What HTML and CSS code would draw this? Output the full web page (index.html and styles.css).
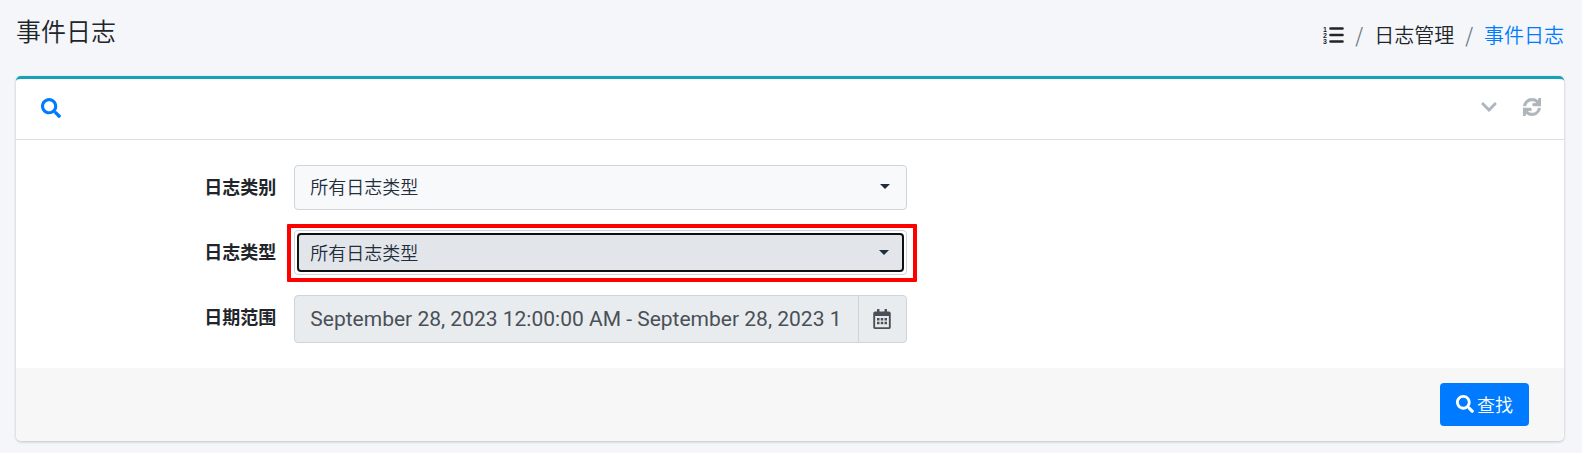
FILE: index.html
```html
<!DOCTYPE html>
<html lang="zh-CN">
<head>
    <meta charset="UTF-8">
    <meta name="viewport" content="width=device-width, initial-scale=1.0">
    <title>事件日志</title>
    <link rel="stylesheet" href="styles.css">
</head>
<body>
    <!-- Page title + breadcrumb -->
    <header class="content-header">
        <h1>事件日志</h1>
        <nav aria-label="breadcrumb">
            <ol class="breadcrumb">
                <li>
                    <svg class="icon-list" viewBox="0 0 21 18" aria-hidden="true">
                        <g class="list-num">
                            <text x="0" y="6">1</text>
                            <text x="0" y="12">2</text>
                            <text x="0" y="18">3</text>
                        </g>
                        <path d="M7.500 2.500h12M7.500 9h12M7.500 15.500h12" fill="none" stroke="currentColor" stroke-width="2.600" stroke-linecap="round"/>
                    </svg>
                </li>
                <li>日志管理</li>
                <li><a href="#">事件日志</a></li>
            </ol>
        </nav>
    </header>

    <main class="card">
        <div class="card-header">
            <svg class="icon-search" viewBox="0 0 512 512" aria-hidden="true"><path fill="currentColor" d="M505 442.700L405.300 343c-4.500-4.500-10.600-7-17-7H372c27.600-35.300 44-79.700 44-128C416 93.100 322.900 0 208 0S0 93.100 0 208s93.100 208 208 208c48.300 0 92.700-16.400 128-44v16.300c0 6.400 2.500 12.500 7 17l99.700 99.700c9.400 9.400 24.600 9.400 33.900 0l28.300-28.300c9.400-9.400 9.400-24.600.1-34zM208 336c-70.700 0-128-57.200-128-128 0-70.700 57.200-128 128-128 70.700 0 128 57.200 128 128 0 70.700-57.200 128-128 128z"/></svg>
            <div class="card-tools">
                <button type="button" class="btn-tool" aria-label="折叠">
                    <svg class="icon-chevron" viewBox="0 0 448 512"><path fill="currentColor" d="M207.029 381.476L12.686 187.132c-9.373-9.373-9.373-24.569 0-33.941l22.667-22.667c9.357-9.357 24.522-9.375 33.901-.04L224 284.505l154.745-154.021c9.379-9.335 24.544-9.317 33.901.04l22.667 22.667c9.373 9.373 9.373 24.569 0 33.941L240.971 381.476c-9.373 9.372-24.569 9.372-33.942 0z"/></svg>
                </button>
                <button type="button" class="btn-tool" aria-label="刷新">
                    <svg class="icon-sync" viewBox="0 0 512 512"><path fill="currentColor" stroke="currentColor" stroke-width="18" d="M440.650 12.570l4 82.770A247.160 247.160 0 0 0 255.830 8C134.730 8 33.910 94.920 12.290 209.820A12 12 0 0 0 24.090 224h49.050a12 12 0 0 0 11.670-9.260 175.910 175.910 0 0 1 317-56.940l-101.460-4.860a12 12 0 0 0-12.570 12v47.410a12 12 0 0 0 12 12H500a12 12 0 0 0 12-12V12a12 12 0 0 0-12-12h-47.370a12 12 0 0 0-11.980 12.570zM255.830 432a175.610 175.610 0 0 1-146-77.800l101.800 4.870a12 12 0 0 0 12.570-12v-47.400a12 12 0 0 0-12-12H12a12 12 0 0 0-12 12V500a12 12 0 0 0 12 12h47.350a12 12 0 0 0 12-12.600l-4.150-82.570A247.170 247.170 0 0 0 255.830 504c121.110 0 221.930-86.920 243.550-201.820a12 12 0 0 0-11.800-14.180h-49.050a12 12 0 0 0-11.670 9.260A175.860 175.860 0 0 1 255.830 432z"/><path fill="currentColor" d="M440 40L360 160l-90-10v70h220V20zM72 472l80-120 90 10v-70H20v200z"/></svg>
                </button>
            </div>
        </div>

        <form id="searchForm">
            <div class="card-body">
                <div class="form-row">
                    <label for="logCategory">日志类别</label>
                    <div class="field">
                        <div class="select-wrap">
                            <select id="logCategory" class="select">
                                <option>所有日志类型</option>
                            </select>
                        </div>
                    </div>
                </div>
                <div class="form-row">
                    <label for="logType">日志类型</label>
                    <div class="field">
                        <div class="select-wrap highlight">
                            <select id="logType" class="select active">
                                <option>所有日志类型</option>
                            </select>
                        </div>
                    </div>
                </div>
                <div class="form-row">
                    <label for="dateRange">日期范围</label>
                    <div class="field">
                        <div class="input-group">
                            <input type="text" id="dateRange" readonly value="September 28, 2023 12:00:00 AM - September 28, 2023 11:59:59 PM">
                            <span class="input-addon">
                                <svg class="icon-calendar" viewBox="0 0 448 512" aria-hidden="true"><path fill="currentColor" fill-rule="evenodd" d="M400 64h-48V12c0-6.600-5.400-12-12-12h-40c-6.600 0-12 5.400-12 12v52H160V12c0-6.600-5.400-12-12-12h-40c-6.600 0-12 5.400-12 12v52H48C21.500 64 0 85.500 0 112v352c0 26.500 21.500 48 48 48h352c26.500 0 48-21.500 48-48V112c0-26.500-21.500-48-48-48zm-6 400H54c-3.300 0-6-2.700-6-6V180h352v278c0 3.300-2.700 6-6 6z"/><path fill="currentColor" d="M96 228h64v64H96zM192 228h64v64h-64zM288 228h64v64h-64zM96 324h64v64H96zM192 324h64v64h-64zM288 324h64v64h-64z"/></svg>
                            </span>
                        </div>
                    </div>
                </div>
            </div>
            <div class="card-footer">
                <button type="button" class="btn-primary">
                    <svg class="icon-search-sm" viewBox="0 0 512 512" aria-hidden="true"><path fill="currentColor" d="M505 442.700L405.300 343c-4.500-4.500-10.600-7-17-7H372c27.600-35.300 44-79.700 44-128C416 93.100 322.900 0 208 0S0 93.100 0 208s93.100 208 208 208c48.300 0 92.700-16.400 128-44v16.300c0 6.400 2.500 12.500 7 17l99.700 99.700c9.400 9.400 24.600 9.400 33.900 0l28.300-28.300c9.400-9.400 9.400-24.600.1-34zM208 336c-70.700 0-128-57.200-128-128 0-70.700 57.200-128 128-128 70.700 0 128 57.200 128 128 0 70.700-57.200 128-128 128z"/></svg>
                    查找
                </button>
            </div>
        </form>
    </main>
</body>
</html>
```
FILE: styles.css
```css
* {
    margin: 0;
    padding: 0;
    box-sizing: border-box;
}

body {
    font-family: "Noto Sans CJK SC", sans-serif;
    font-size: 18px;
    font-weight: 350;
    line-height: 26px;
    color: #212529;
    background: #f4f6f9;
    padding: 16px 18px 12px 16px;
}

svg {
    display: block;
}

a {
    color: #007bff;
    text-decoration: none;
}

/* header */
.content-header {
    display: flex;
    justify-content: space-between;
    align-items: flex-start;
    height: 60px;
}

.content-header h1 {
    font-size: 25px;
    font-weight: 350;
    line-height: 28px;
}

.breadcrumb {
    display: flex;
    align-items: center;
    list-style: none;
    font-size: 20px;
    line-height: 38px;
}

.breadcrumb li + li::before {
    content: "/";
    color: #6c757d;
    padding: 0 11px;
}

.icon-list {
    width: 21px;
    height: 18px;
}

.list-num {
    font-family: "Liberation Sans", sans-serif;
    font-size: 7px;
    font-weight: 700;
    fill: currentColor;
}

/* card */
.card {
    background: #fff;
    border-top: 3px solid #17a2b8;
    border-radius: 5px;
    box-shadow: 0 0 1px rgba(0, 0, 0, 0.13), 0 1px 3px rgba(0, 0, 0, 0.2);
    overflow: hidden;
}

.card-header {
    display: flex;
    justify-content: space-between;
    align-items: center;
    height: 61px;
    padding: 0 23px 2px 25px;
    border-bottom: 1px solid #dfdfdf;
}

.icon-search {
    width: 20px;
    height: 20px;
    color: #007bff;
}

.card-tools {
    display: flex;
    align-items: center;
    gap: 26px;
    padding-bottom: 2px;
}

.btn-tool {
    border: none;
    background: transparent;
    color: #adb5bd;
    cursor: pointer;
}

.icon-chevron {
    width: 16px;
    height: 18px;
}

.icon-sync {
    width: 18px;
    height: 18px;
}

.card-body {
    display: flex;
    flex-direction: column;
    gap: 20px;
    padding: 25px 17px;
}

.form-row {
    display: flex;
}

.form-row label {
    width: 16.6667%;
    padding: 8px 9px 0;
    text-align: right;
    font-weight: 700;
}

.field {
    width: 41.6667%;
    padding: 0 9px;
}

.select-wrap {
    position: relative;
}

.select {
    display: block;
    width: 100%;
    height: 45px;
    padding: 0 15px 3px;
    font: inherit;
    color: #1f2d3d;
    background: #f8f9fa;
    border: 1px solid #ced4da;
    border-radius: 4px;
    appearance: none;
}

/* caret */
.select-wrap::before {
    content: "";
    position: absolute;
    right: 17px;
    top: 19px;
    border: 5px solid transparent;
    border-top-color: #1f2d3d;
    border-bottom: 0;
    pointer-events: none;
}

/* focused select: black ring inside the grey frame */
.highlight {
    padding: 2px;
    border: 1px solid #ced4da;
    border-radius: 4px;
}

.select.active {
    height: 39px;
    padding: 0 11px 2px;
    background: #e2e6ea;
    border: 2px solid #101010;
    outline: none;
}

.highlight::after {
    content: "";
    position: absolute;
    inset: -7px -11px -8px -8px;
    border: 4px solid #f00;
    border-radius: 1px;
    pointer-events: none;
}

.input-group {
    display: flex;
    height: 48px;
    background: #e9ecef;
    border: 1px solid #ced4da;
    border-radius: 4px;
}

.input-group input {
    flex: 1;
    min-width: 0;
    margin: 0 15px;
    border: none;
    outline: none;
    background: transparent;
    color: #495057;
    font-family: Roboto, sans-serif;
    font-size: 21px;
    font-weight: 400;
}

.input-addon {
    display: flex;
    align-items: center;
    padding: 0 15px 0 14px;
    border-left: 1px solid #ced4da;
    color: #495057;
}

.icon-calendar {
    width: 18px;
    height: 20px;
}

.card-footer {
    display: flex;
    justify-content: flex-end;
    padding: 15px 35px;
    background: #f7f7f7;
}

.btn-primary {
    display: flex;
    align-items: center;
    gap: 3px;
    height: 43px;
    padding: 0 16px 2px;
    border: none;
    border-radius: 4px;
    background: #007bff;
    color: #fff;
    font: inherit;
    cursor: pointer;
}

.icon-search-sm {
    width: 18px;
    height: 18px;
}
```
